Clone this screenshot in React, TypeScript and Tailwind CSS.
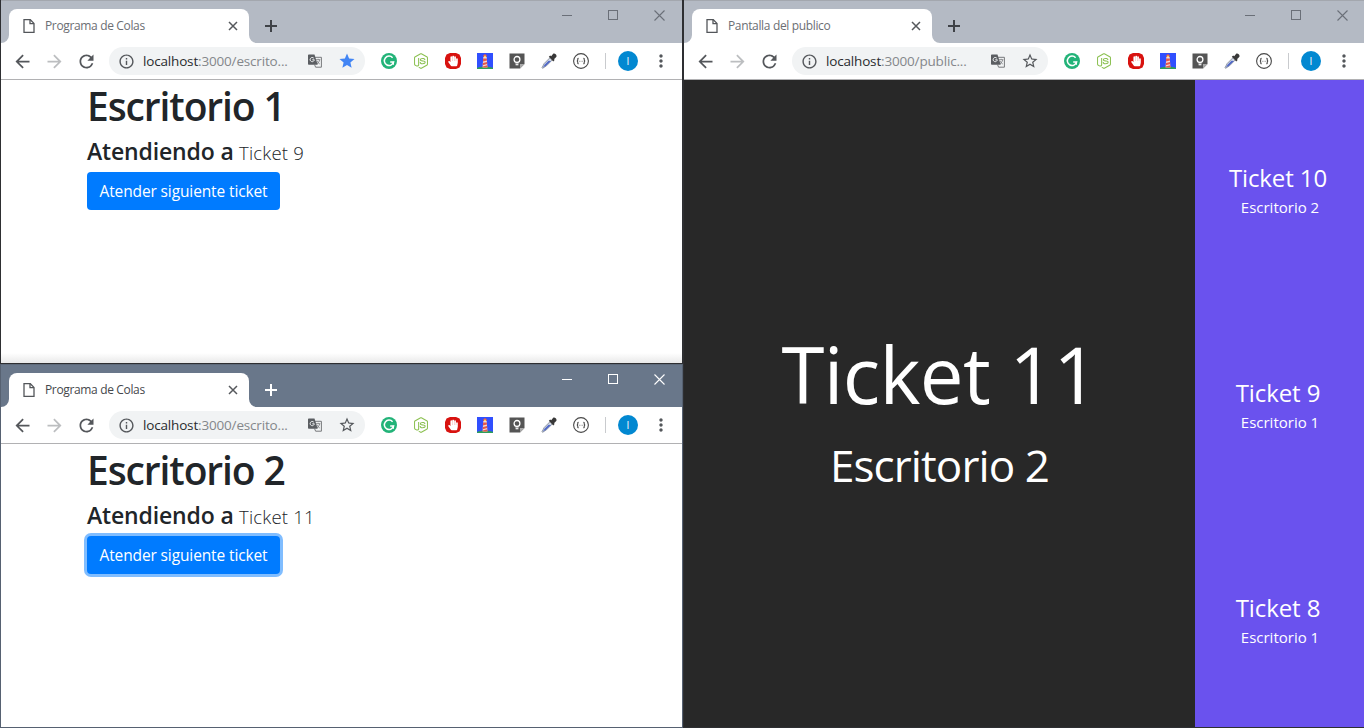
import type { ReactNode } from "react";
import {
  MdArrowBack,
  MdArrowForward,
  MdRefresh,
  MdInfoOutline,
  MdStar,
  MdStarBorder,
  MdMoreVert,
} from "react-icons/md";
import { FaNodeJs, FaHandPaper } from "react-icons/fa";

function PageIcon() {
  return (
    <svg width="12" height="14" viewBox="0 0 12 14" fill="none" stroke="#53565a" strokeWidth="1.3">
      <path d="M1 .7h6.3L11 4.4v8.9H1z" />
      <path d="M7 .7v4h4" />
    </svg>
  );
}

function TranslateIcon() {
  return (
    <svg width="14" height="14" viewBox="0 0 14 14" fill="none">
      <path d="M6 3.300h7.400v9.900H7.600l-1-2.500" stroke="#77797c" strokeWidth="1" />
      <path d="M8 5.700h4.300M10.200 4.800v.9M11.700 5.700c-.3 1.700-1.300 3.100-2.700 4.200M9 7c.5 1.300 1.500 2.300 2.800 3" stroke="#77797c" strokeWidth=".8" />
      <path d="M.8.500h5.700l3.200 10.300H.8a.8.800 0 0 1-.8-.8V1.300a.8.800 0 0 1 .8-.8z" fill="#5b5e62" />
      <path d="M5.800 4.200A2.100 2.100 0 1 0 6.300 5.800H4.300" stroke="#f1f3f4" strokeWidth="1" />
    </svg>
  );
}

function GrammarlyIcon() {
  return (
    <svg width="16" height="16" viewBox="0 0 16 16" fill="none">
      <circle cx="8" cy="8" r="8" fill="#22b378" />
      <path d="M11.6 4.7A4.7 4.7 0 1 0 12.6 9H9.2" stroke="#fff" strokeWidth="1.5" />
      <path d="M12.4 8.8v3" stroke="#fff" strokeWidth="1.2" />
    </svg>
  );
}

function HandIcon() {
  return (
    <svg width="16" height="16" viewBox="0 0 16 16">
      <path d="M5 0h6l3.500 1.500L16 5v6l-1.500 3.500L11 16H5l-3.500-1.500L0 11V5l1.500-3.500z" fill="#d8120f" />
      <FaHandPaper x="2.500" y="2.500" size={11} color="#fff" />
    </svg>
  );
}

function LighthouseIcon() {
  return (
    <svg width="16" height="16" viewBox="0 0 16 16">
      <path d="M0 0h16v16H0z" fill="#304ffe" />
      <path d="M0 16v-1c4-2 12-2 16 0v1z" fill="#2e9e5b" />
      <path d="M6.300 4h3.400l.7 10.500H5.600z" fill="#f4d9d0" />
      <path d="M6.100 5.500h3.700l.2 2-4 1zM5.900 10l4.200-1 .2 2-4.500 1.200zM5.700 13.500l4.600-1.200.2 2.200H5.600z" fill="#e2574c" />
      <path d="M6.300 2.200 8 1l1.700 1.200V4H6.300z" fill="#e2574c" />
      <path d="M7 2.700h2V4H7z" fill="#ffd65a" />
    </svg>
  );
}

function NoteIcon() {
  return (
    <svg width="16" height="16" viewBox="0 0 16 16">
      <path d="M.5.500h15v10.500L11 15.500H.5z" fill="#555" />
      <path d="M11 15.500V11h4.500z" fill="#aaa" />
      <circle cx="8" cy="6.400" r="2.900" fill="none" stroke="#fff" strokeWidth="1.300" />
      <path d="M6.600 9h2.800v3.300H6.600z" fill="#fff" />
      <path d="M6.600 10.700h2.800" stroke="#555" strokeWidth=".6" />
    </svg>
  );
}

function DropperIcon() {
  return (
    <svg width="16" height="16" viewBox="0 0 16 16">
      <path d="M9.500 4.200 3.200 10.500 1 14.800l.5.500 4-2.500 6.200-6.300z" fill="#d3dae6" stroke="#77808f" strokeWidth=".8" />
      <path d="M7.500 7.800 3.500 11.700l-1.500 2.800 3-1.700 5-4.900z" fill="#5068c8" />
      <path d="M7.800 3.700 9.200 2.400l1 .8L12 1c1.200-1.300 4.200.5 3.400 2.800-.2.700-2 2-2.400 2.300l.6 1-1.300 1.300z" fill="#383838" />
    </svg>
  );
}

function BracesIcon() {
  return (
    <svg width="16" height="16" viewBox="0 0 16 16" fill="none" stroke="#484848">
      <circle cx="8" cy="8" r="7.400" strokeWidth="1.100" />
      <path d="M5.700 5.200c-1.200 0-.9.700-.9 1.500S4.500 8 3.800 8c.7 0 1 .5 1 1.300s-.3 1.500.9 1.500M10.300 5.200c1.200 0 .9.700.9 1.500S11.500 8 12.200 8c-.7 0-1 .5-1 1.300s.3 1.500-.9 1.500" strokeWidth="1.100" />
      <path d="M6.500 8.300h.8M8.700 8.300h.8" strokeWidth=".9" />
    </svg>
  );
}

function Slot({ children }: { children: ReactNode }) {
  return <div className="flex w-8 shrink-0 items-center justify-center">{children}</div>;
}

function TabCurve({ side }: { side: "left" | "right" }) {
  return (
    <svg width="8" height="8" viewBox="0 0 8 8" className="self-end fill-white">
      <path d={side === "left" ? "M8 0v8H0a8 8 0 0 0 8-8z" : "M0 0v8h8a8 8 0 0 1-8-8z"} />
    </svg>
  );
}

interface BrowserProps {
  title: ReactNode;
  path: ReactNode;
  active?: boolean;
  starred?: boolean;
  children: ReactNode;
}

function Browser({ title, path, active = false, starred = false, children }: BrowserProps) {
  return (
    <section
      className={`flex h-full w-full flex-col border-l bg-white ${active ? "border-r border-[#566171]" : "border-[#2e2f32]"}`}
    >
      <header
        className={`flex h-[43px] shrink-0 border-t ${
          active ? "border-[#5e6a7a] bg-[#69778a] text-white" : "border-[#a3a7ae] bg-[#b4bac4] text-[#6a6f78]"
        }`}
      >
        <TabCurve side="left" />
        <div className="mt-2 flex w-60 items-center rounded-t-lg bg-white pl-3.5">
          <PageIcon />
          <span
            className={`ml-2.5 flex-1 text-xs tracking-[-0.35px] whitespace-nowrap ${active ? "text-[#45484c]" : "text-[#6b6e73]"}`}
          >
            {title}
          </span>
          <svg width="10" height="10" viewBox="0 0 10 10" className="mr-[11px]" stroke="#55585c" strokeWidth="1.500">
            <path d="m1 1 8 8M9 1 1 9" />
          </svg>
        </div>
        <TabCurve side="right" />
        <svg
          width="12"
          height="12"
          viewBox="0 0 12 12"
          className="mt-[19px] ml-2"
          stroke={active ? "#fff" : "#3f4247"}
          strokeWidth="2"
        >
          <path d="M6 0v12M0 6h12" />
        </svg>
        <div className="ml-auto flex h-7">
          <div className="flex w-[46px] items-center justify-center">
            <svg width="11" height="11" viewBox="0 0 11 11" stroke="currentColor" shapeRendering="crispEdges">
              <path d="M0 5.500h10" />
            </svg>
          </div>
          <div className="flex w-[46px] items-center justify-center">
            <svg width="11" height="11" viewBox="0 0 11 11" fill="none" stroke="currentColor" shapeRendering="crispEdges">
              <path d="M.5.500h9v9h-9z" />
            </svg>
          </div>
          <div className="flex w-[46px] items-center justify-center">
            <svg width="11" height="11" viewBox="0 0 11 11" stroke="currentColor" strokeWidth="1.100">
              <path d="m.5.500 10 10M10.500.500l-10 10" />
            </svg>
          </div>
        </div>
      </header>
      <nav className="flex h-[37px] shrink-0 items-center border-b border-[#b1b1b3] bg-white pl-[5px] text-[#54575b]">
        <Slot><MdArrowBack size={21} /></Slot>
        <Slot><MdArrowForward size={21} className="text-[#bcbec0]" /></Slot>
        <Slot><MdRefresh size={21} /></Slot>
        <div className="ml-[7px] flex h-7 w-64 shrink-0 items-center rounded-full bg-[#f1f3f4]">
          <MdInfoOutline size={17} className="ml-[9px]" />
          <span className="ml-2 w-[156px] text-[13.500px] tracking-[-0.170px] whitespace-nowrap text-[#84878b]">
            <span className="text-[#292b2e]">localhost</span>
            {path}
          </span>
          <Slot><TranslateIcon /></Slot>
          <Slot>{starred ? <MdStar size={18} className="text-[#4285f4]" /> : <MdStarBorder size={18} />}</Slot>
        </div>
        <div className="ml-2 flex">
          <Slot><GrammarlyIcon /></Slot>
          <Slot><FaNodeJs size={16} color="#8cc152" /></Slot>
          <Slot><HandIcon /></Slot>
          <Slot><LighthouseIcon /></Slot>
          <Slot><NoteIcon /></Slot>
          <Slot><DropperIcon /></Slot>
          <Slot><BracesIcon /></Slot>
        </div>
        <div className="ml-2 h-4 w-px bg-[#c9cbce]" />
        <div className="ml-3 flex size-5 items-center justify-center rounded-full bg-[#0288d1] text-[10px] text-white">I</div>
        <MdMoreVert size={20} className="ml-[13px]" />
      </nav>
      {children}
    </section>
  );
}

interface DeskProps {
  desk: number;
  ticket: number;
  focused?: boolean;
}

function Desk({ desk, ticket, focused = false }: DeskProps) {
  return (
    <main
      className={`flex min-h-0 flex-1 flex-col items-start border-b pl-[86px] text-[#212529] ${
        focused ? "border-[#566171]" : "border-[#2e2f32] bg-linear-to-t from-[#e9e9e9] to-white to-[10px]"
      }`}
    >
      <h1 className="mt-0.5 h-12 text-[39px] leading-12 font-semibold tracking-[-1.100px] whitespace-nowrap">
        Escritorio {desk}
      </h1>
      <h4 className="mt-[7px] flex h-[29px] items-baseline text-[23px] leading-[29px] font-semibold whitespace-nowrap">
        <span className="w-[152px] tracking-[-0.150px]">Atendiendo a</span>
        <small className="text-[18.500px] font-light tracking-[0.200px]">Ticket {ticket}</small>
      </h4>
      <button
        className={`mt-1.5 h-[38px] w-[193px] rounded bg-[#007bff] pt-0.5 text-[15.500px] tracking-[-0.120px] whitespace-nowrap text-white ${
          focused ? "ring-3 ring-[#80bdff]" : ""
        }`}
      >
        Atender siguiente ticket
      </button>
    </main>
  );
}

const recent = [
  { ticket: 10, desk: 2 },
  { ticket: 9, desk: 1 },
  { ticket: 8, desk: 1 },
];

function PublicScreen() {
  return (
    <main className="flex min-h-0 flex-1 border-b border-[#2e2f32] bg-[#282828] text-white">
      <div className="flex w-[511px] flex-col items-center whitespace-nowrap">
        <h1 className="mt-[239px] text-[78px] leading-[110px] tracking-[-0.700px]">Ticket 11</h1>
        <h3 className="mt-[6px] text-[44px] leading-[60px] tracking-[-0.900px]">Escritorio 2</h3>
      </div>
      <aside className="grid flex-1 auto-rows-[215px] bg-[#6a52ee] pr-1">
        {recent.map((item) => (
          <div key={item.ticket} className="flex flex-col items-center pt-[81px] whitespace-nowrap">
            <span className="text-2xl leading-[34px] tracking-[-0.100px]">Ticket {item.ticket}</span>
            <span className="pl-1 text-[15px] leading-6">Escritorio {item.desk}</span>
          </div>
        ))}
      </aside>
    </main>
  );
}

export default function App() {
  return (
    <div className="flex h-[728px] w-[1364px] overflow-hidden bg-[#2e2f32] font-['Open_Sans','Noto_Sans',sans-serif]">
      <div className="flex w-[683px] shrink-0 flex-col">
        <div className="h-[364px] border-r border-[#2e2f32]">
          <Browser title="Programa de Colas" path=":3000/escrito..." starred>
            <Desk desk={1} ticket={9} />
          </Browser>
        </div>
        <div className="h-[364px]">
          <Browser title="Programa de Colas" path=":3000/escrito..." active>
            <Desk desk={2} ticket={11} focused />
          </Browser>
        </div>
      </div>
      <div className="flex w-[681px] shrink-0 overflow-hidden">
        <div className="w-[682px] shrink-0">
          <Browser title="Pantalla del publico" path=":3000/public...">
            <PublicScreen />
          </Browser>
        </div>
      </div>
    </div>
  );
}
